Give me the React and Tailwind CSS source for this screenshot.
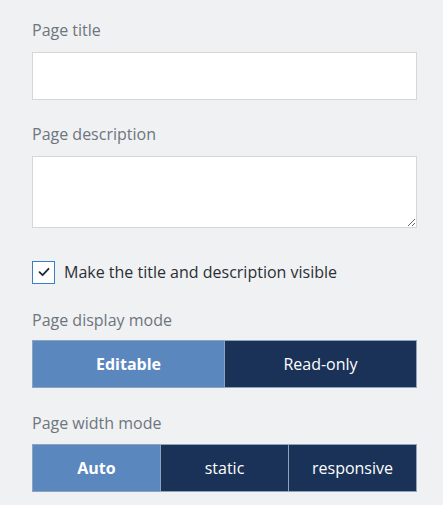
import { useState } from 'react';

const font = { fontFamily: '"Open Sans", "Liberation Sans", sans-serif' };

function Segmented({ options, value, onChange }) {
  return (
    <div className="flex border border-[#8fa3bf] bg-[#8fa3bf] gap-px">
      {options.map((opt) => (
        <button
          key={opt}
          onClick={() => onChange(opt)}
          className={`flex-1 h-[46px] text-[16px] text-white ${
            value === opt ? 'bg-[#5b87bf] font-bold' : 'bg-[#1a3257]'
          }`}
        >
          {opt}
        </button>
      ))}
    </div>
  );
}

export default function App() {
  const [visible, setVisible] = useState(true);
  const [display, setDisplay] = useState('Editable');
  const [width, setWidth] = useState('Auto');

  return (
    <div style={font} className="min-h-[505px] bg-[#f0f1f3] pl-8 pr-[26px] pt-[18px]">
      <label className="block text-[16px] leading-6 text-[#6e757d] mb-[10px]">Page title</label>
      <input className="block w-full h-[48px] bg-white border border-[#d6d6d6] outline-none px-3 text-[16px]" />

      <label className="block text-[16px] leading-6 text-[#6e757d] mt-[22px] mb-[10px]">Page description</label>
      <textarea className="block w-full h-[72px] bg-white border border-[#d6d6d6] outline-none px-3 py-2 text-[16px]" />

      <label className="flex items-center gap-[9px] mt-8 cursor-pointer">
        <span
          onClick={() => setVisible(!visible)}
          className="w-[23px] h-[23px] bg-white border border-[#3a7fc3] flex items-center justify-center"
        >
          {visible && (
            <svg width="14" height="14" viewBox="0 0 14 14" fill="none">
              <path d="M2.5 7.2 L5.6 10.2 L11.5 3.8" stroke="#1d2b3d" strokeWidth="1.8" strokeLinecap="round" strokeLinejoin="round" />
            </svg>
          )}
        </span>
        <span className="text-[16px] text-[#2b2f33]">Make the title and description visible</span>
      </label>

      <label className="block text-[16px] leading-6 text-[#6e757d] mt-[24px] mb-[8px]">Page display mode</label>
      <Segmented options={['Editable', 'Read-only']} value={display} onChange={setDisplay} />

      <label className="block text-[16px] leading-6 text-[#6e757d] mt-[23px] mb-[9px]">Page width mode</label>
      <Segmented options={['Auto', 'static', 'responsive']} value={width} onChange={setWidth} />
    </div>
  );
}
